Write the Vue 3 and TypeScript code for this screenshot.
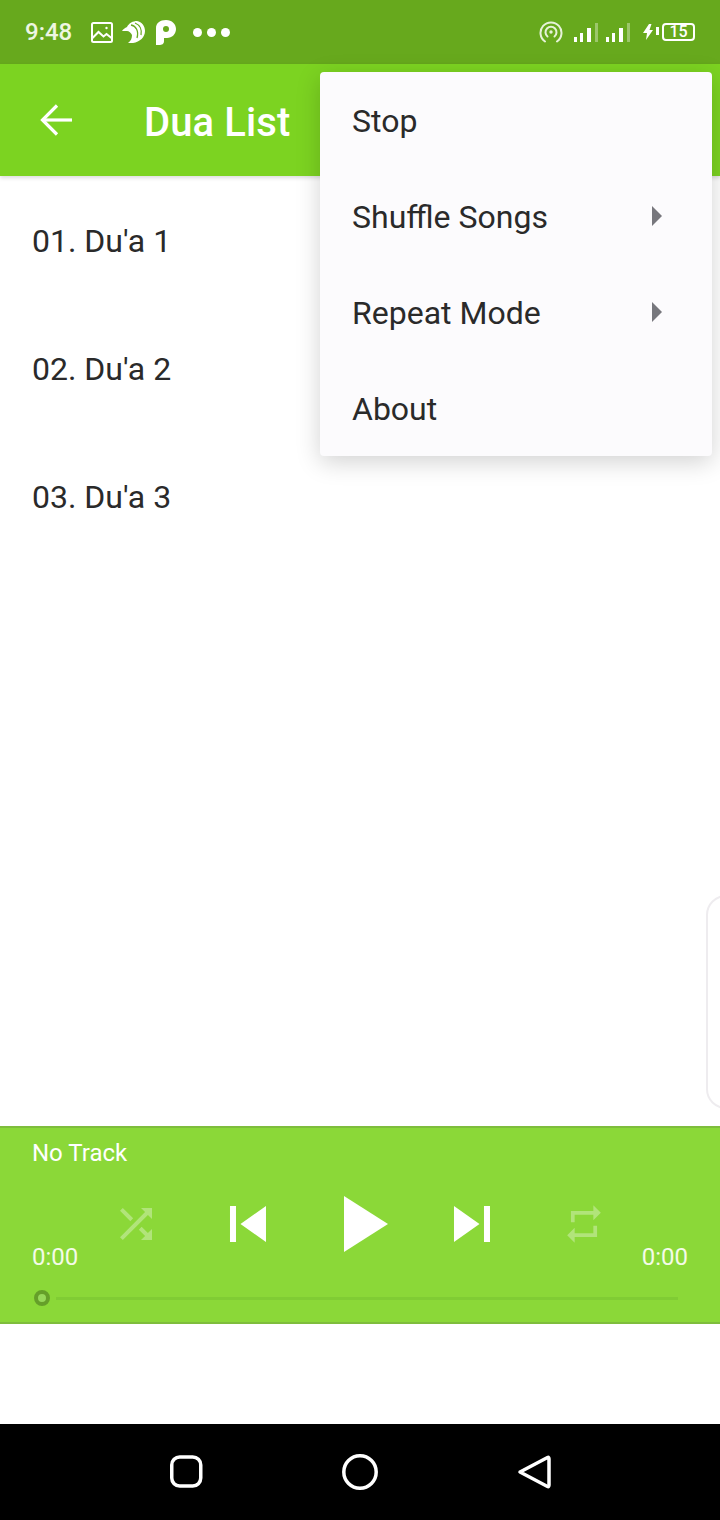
<script setup lang="ts">
const tracks = ["01. Du'a 1", "02. Du'a 2", "03. Du'a 3"];
const menu = [
  { label: 'Stop', sub: false },
  { label: 'Shuffle Songs', sub: true },
  { label: 'Repeat Mode', sub: true },
  { label: 'About', sub: false },
];
const signals = [0, 1];
</script>

<template>
  <div class="screen">
    <div class="status">
      <span class="clock">9:48</span>
      <svg class="s-pic" width="24" height="23" viewBox="0 0 24 23" fill="none" stroke="#fff" stroke-width="2">
        <rect x="2" y="2" width="20" height="19" rx="1.5" />
        <path d="M2.5 17l6-6 5 4.5 3-2.5 5 4" />
        <circle cx="16.500" cy="7" r="1.200" fill="#fff" stroke="none" />
      </svg>
      <svg class="s-bird" width="24" height="24" viewBox="0 0 24 24">
        <path fill="#fff" d="M0 11c1-2 3-3 5-4 2-4 6-6 10-6 5 1 8 5 8 10 0 6-5 11-12 12H6c3-2 4-5 4-8-1-2-3-4-5-4-2 0-4 0-5 0z" />
        <path fill="none" stroke="#67a91d" stroke-width="1.300" d="M9 5c5 1 8 6 6 13M13 3c5 2 7 7 6 12" />
      </svg>
      <svg class="s-p" width="20" height="25" viewBox="0 0 20 25" fill="#fff">
        <path fill-rule="evenodd" d="M0 8C0 3 4 0 10 0c6 0 10 4 10 9s-4 9-9 9H8v3c0 3-2 4-5 4H0zM10 6a3 3 0 1 0 0 6 3 3 0 0 0 0-6z" />
      </svg>
      <div class="dots"><i></i><i></i><i></i></div>
      <div class="status-right">
        <svg width="24" height="24" viewBox="0 0 24 24" fill="none" stroke="#e6f2d8" stroke-width="2" stroke-linecap="round">
          <path d="M6 21.500a10.500 10.500 0 1 1 12 0" />
          <path d="M8.500 16.500a5.500 5.500 0 1 1 7 0" />
          <circle cx="12" cy="12" r="1.700" fill="#e6f2d8" stroke="none" />
        </svg>
        <div class="signals">
          <svg v-for="n in signals" :key="n" width="25" height="20" viewBox="0 0 25 20" fill="#fff">
            <rect x="0" y="14" width="3" height="5" />
            <rect x="6" y="10" width="3" height="9" />
            <rect x="13" y="5" width="4" height="14" />
            <rect x="21" y="0" width="3" height="19" opacity=".35" />
          </svg>
        </div>
        <svg class="bolt" width="16" height="16" viewBox="0 0 16 16" fill="#fff">
          <path d="M6 0L0 9h4l-1 7 7-10H6.500L8.500 0z" />
          <rect x="13" y="3" width="3" height="8" />
        </svg>
        <div class="battery">15</div>
      </div>
    </div>

    <header class="appbar">
      <svg class="back" width="34" height="32" viewBox="0 0 34 32" fill="none" stroke="#fff" stroke-width="3.200">
        <path d="M17 1.500L2.500 16 17 30.500" />
        <path d="M3 16h29" />
      </svg>
      <h1 class="title">Dua List</h1>
    </header>

    <main class="content">
      <div v-for="t in tracks" :key="t" class="track">{{ t }}</div>
      <div class="edge-card"></div>
    </main>

    <section class="player">
      <div class="now">No Track</div>
      <div class="controls">
        <span class="time">0:00</span>
        <div class="buttons">
          <svg class="dim" width="80" height="80" viewBox="-8 -8 40 40" fill="#fff">
            <path d="M10.590 9.170L5.410 4 4 5.410l5.170 5.170 1.420-1.410zM14.500 4l2.040 2.040L4 18.590 5.410 20 17.960 7.460 20 9.500V4h-5.500zm.33 9.410l-1.410 1.410 3.130 3.130L14.500 20H20v-5.500l-2.040 2.040-3.130-3.130z" />
          </svg>
          <svg width="80" height="80" viewBox="-1.330 -1.330 26.670 26.670" fill="#fff">
            <path d="M6 6h2v12H6zm3.500 6l8.500 6V6z" />
          </svg>
          <svg class="play" width="80" height="80" viewBox="0 0 80 80" fill="#fff">
            <path d="M20 12v56l44-28z" />
          </svg>
          <svg class="next" width="80" height="80" viewBox="-1.330 -1.330 26.670 26.670" fill="#fff">
            <path d="M6 18l8.500-6L6 6v12zM16 6v12h2V6h-2z" />
          </svg>
          <svg class="dim" width="80" height="80" viewBox="-9.400 -9.400 42.800 42.800" fill="#fff">
            <path d="M7 7h10v3l4-4-4-4v3H5v6h2V7zm10 10H7v-3l-4 4 4 4v-3h12v-6h-2v4z" />
          </svg>
        </div>
        <span class="time">0:00</span>
      </div>
      <div class="seek">
        <div class="thumb"></div>
        <div class="rail"></div>
      </div>
    </section>

    <div class="spacer"></div>

    <nav class="navbar">
      <svg width="36" height="36" viewBox="0 0 36 36" fill="none" stroke="#fff" stroke-width="3.500">
        <rect x="3.750" y="3" width="29" height="29" rx="8" />
      </svg>
      <svg width="36" height="36" viewBox="0 0 36 36" fill="none" stroke="#fff" stroke-width="3.500">
        <circle cx="18" cy="18" r="16.200" />
      </svg>
      <svg width="36" height="36" viewBox="0 0 36 36" fill="none" stroke="#fff" stroke-width="3.500" stroke-linejoin="round">
        <path d="M4 18L31.500 3.500c1.200-.5 1.500.5 1.500 1.500v26c0 1-.5 2-1.500 1.500z" />
      </svg>
    </nav>

    <div class="menu">
      <div v-for="m in menu" :key="m.label" class="menu-item">
        <span class="menu-label">{{ m.label }}</span>
        <i v-if="m.sub" class="caret"></i>
      </div>
    </div>
  </div>
</template>

<style>
html,
body {
  margin: 0;
  background: #fff;
}
</style>

<style scoped>
.screen {
  position: relative;
  display: flex;
  flex-direction: column;
  width: 720px;
  height: 1520px;
  overflow: hidden;
  font-family: Roboto, "Liberation Sans", sans-serif;
  background: #fff;
}

.status {
  display: flex;
  align-items: center;
  height: 64px;
  padding: 0 25px;
  box-sizing: border-box;
  background: #67a91d;
  color: #fff;
  flex: none;
}

.clock {
  font-size: 24px;
  font-weight: 500;
  width: 65px;
  color: #eef6e2;
}

.s-bird {
  margin-left: 8px;
}

.s-p {
  margin-left: 10px;
}

.dots {
  display: flex;
  gap: 5px;
  margin-left: 17px;
}

.dots i {
  width: 9px;
  height: 9px;
  border-radius: 50%;
  background: #fff;
}

.status-right {
  display: flex;
  align-items: center;
  margin-left: auto;
}

.signals {
  display: flex;
  gap: 7px;
  margin-left: 11px;
  margin-top: 2px;
}

.bolt {
  margin-left: 12px;
}

.battery {
  width: 33px;
  height: 18px;
  margin-left: 3px;
  box-sizing: border-box;
  border: 2px solid #fff;
  border-radius: 4px;
  font-size: 16px;
  font-weight: 500;
  line-height: 14px;
  text-align: center;
}

.appbar {
  display: flex;
  align-items: center;
  height: 112px;
  flex: none;
  padding-left: 40px;
  background: #7cd321;
  box-shadow: 0 2px 4px rgba(0, 0, 0, 0.14);
  position: relative;
}

.title {
  margin: 4px 0 0 70px;
  font-size: 40px;
  font-weight: 500;
  letter-spacing: 0.1px;
  color: #fff;
}

.content {
  position: relative;
  height: 950px;
  flex: none;
}

.track {
  display: flex;
  align-items: center;
  height: 128px;
  box-sizing: border-box;
  padding: 2px 0 0 32px;
  font-size: 32px;
  color: #2a2a2a;
}

.edge-card {
  position: absolute;
  left: 706px;
  top: 719px;
  width: 40px;
  height: 214px;
  box-sizing: border-box;
  border: 2px solid #eeecef;
  border-radius: 30px;
  background: #fff;
}

.player {
  height: 198px;
  flex: none;
  box-sizing: border-box;
  padding: 10px 32px 0;
  background: #8bd838;
  border-top: 2px solid #7ebd3c;
  border-bottom: 2px solid #7ebd3c;
  color: #fff;
}

.now {
  height: 30px;
  font-size: 24px;
  line-height: 30px;
}

.controls {
  display: flex;
  justify-content: space-between;
  height: 88px;
  margin-top: 16px;
}

.time {
  align-self: flex-end;
  font-size: 24px;
  line-height: 30px;
  color: #f4fbe8;
}

.buttons {
  display: flex;
  gap: 32px;
  align-self: flex-start;
}

.buttons .play {
  margin-left: 4px;
}

.buttons .next {
  margin-left: -4px;
}

.dim {
  opacity: 0.33;
}

.seek {
  display: flex;
  align-items: center;
  height: 50px;
  margin-top: 1px;
  padding-left: 2px;
}

.thumb {
  width: 16px;
  height: 16px;
  box-sizing: border-box;
  border: 4px solid #659f29;
  border-radius: 50%;
  background: #97d85a;
  flex: none;
}

.rail {
  width: 622px;
  height: 3px;
  margin-left: 6px;
  background: #80cc34;
}

.spacer {
  height: 100px;
  flex: none;
}

.navbar {
  display: flex;
  align-items: center;
  justify-content: space-between;
  height: 96px;
  flex: none;
  padding: 0 168px;
  background: #000;
}

.menu {
  position: absolute;
  left: 320px;
  top: 72px;
  width: 392px;
  border-radius: 4px;
  background: #fcfbfd;
  box-shadow: 0 6px 24px rgba(0, 0, 0, 0.18);
}

.menu-item {
  display: flex;
  align-items: center;
  justify-content: space-between;
  height: 96px;
  padding: 0 50px 0 32px;
  font-size: 32px;
  color: #2a2a2a;
}

.menu-label {
  margin-top: 2px;
}

.caret {
  width: 0;
  height: 0;
  border-top: 10px solid transparent;
  border-bottom: 10px solid transparent;
  border-left: 10px solid #77777d;
}
</style>
